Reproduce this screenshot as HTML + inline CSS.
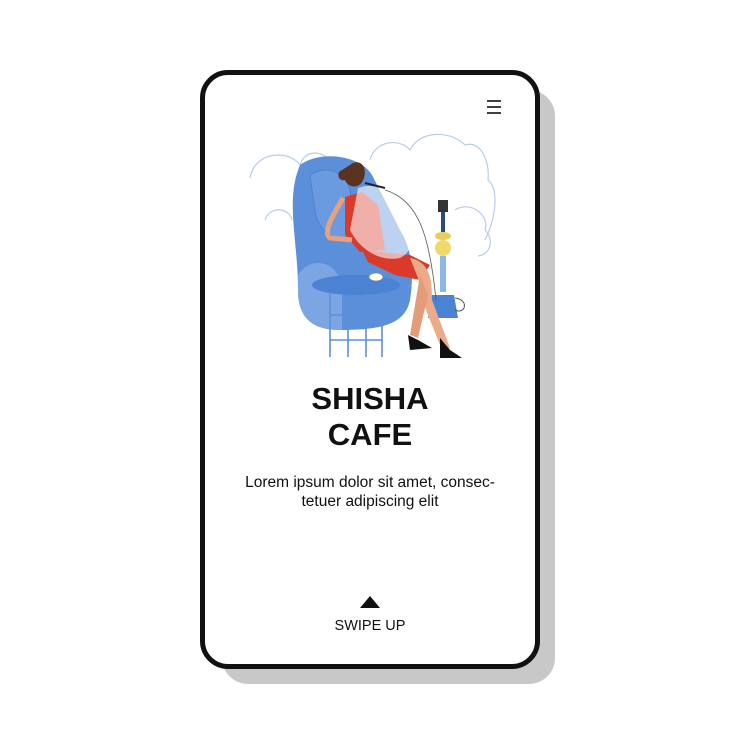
<!DOCTYPE html>
<html><head><meta charset="utf-8"><style>
html,body{margin:0;padding:0;background:#fff;}
body{width:740px;height:740px;position:relative;overflow:hidden;font-family:"Liberation Sans",sans-serif;}
.shadow{position:absolute;left:222px;top:90px;width:333px;height:594px;background:#c8c8c8;border-radius:26px;}
.phone{position:absolute;left:200px;top:70px;width:330px;height:589px;background:#fff;border:5px solid #111;border-radius:28px;}
.t{position:absolute;left:0;width:740px;text-align:center;color:#111;}
</style></head><body>
<div class="shadow"></div>
<div class="phone"></div>
<svg style="position:absolute;left:0;top:0" width="740" height="740">
 <g stroke="#111" stroke-width="1.6"><line x1="487" y1="101" x2="501" y2="101"/><line x1="487" y1="107" x2="501" y2="107"/><line x1="487" y1="113" x2="501" y2="113"/></g>
 <g fill="none" stroke="#b8cde6" stroke-width="1.2">
  <path d="M250 178 C255 150,290 150,300 165 C305 150,320 150,330 160"/>
  <path d="M265 220 C270 205,290 208,292 220"/>
  <path d="M370 160 C375 140,400 138,410 150 C420 130,450 130,465 145 C480 140,490 160,488 180 C500 190,495 220,485 240"/>
  <path d="M455 210 C470 200,490 215,485 230 C495 240,490 255,478 256"/>
 </g>
 <path d="M300 165 C320 150,360 155,372 175 L400 230 C410 245,415 270,410 300 C405 325,380 330,340 330 C305 330,298 310,298 290 C298 240,285 200,300 165 Z" fill="#5b8fd9"/>
 <path d="M310 175 C325 165,345 170,350 190 L355 240 C330 240,318 230,315 210Z" fill="#6a9be0" stroke="#4a7fcf" stroke-width="0.8"/>
 <path d="M298 275 C310 255,340 260,342 290 L342 330 C305 330,298 310,298 290Z" fill="#7ba6e3"/>
 <ellipse cx="356" cy="285" rx="44" ry="10" fill="#4a82d4"/>
 <g stroke="#5b8fd9" stroke-width="1.6" fill="none"><line x1="330" y1="292" x2="330" y2="357"/><line x1="348" y1="294" x2="348" y2="357"/><line x1="366" y1="294" x2="366" y2="357"/><line x1="382" y1="292" x2="382" y2="357"/><line x1="330" y1="315" x2="382" y2="315"/><line x1="330" y1="340" x2="382" y2="340"/></g>
 <ellipse cx="376" cy="277" rx="7" ry="4" fill="#fff" stroke="#888" stroke-width="0.8"/>
 <rect x="438" y="200" width="10" height="12" fill="#333"/>
 <rect x="441" y="212" width="4" height="20" fill="#2a4a80"/>
 <ellipse cx="443" cy="236" rx="8" ry="4" fill="#e8cd5a"/>
 <circle cx="443" cy="248" r="8" fill="#f0d86a"/>
 <rect x="440" y="256" width="6" height="36" fill="#8cb8e8"/>
 <path d="M432 295 L454 295 L458 318 L428 318Z" fill="#4a82d4"/>
 <path d="M455 298 C470 300,465 315,455 310" fill="none" stroke="#555" stroke-width="1"/>
 <path d="M350 165 C358 158,368 165,364 178 C360 190,348 188,345 180 C338 182,336 172,342 170Z" fill="#5a3220"/>
 <path d="M345 197 L362 192 L378 205 L385 250 L360 252 L345 235Z" fill="#d93a2a"/>
 <path d="M343 198 C335 212,322 232,330 238 L352 240" fill="none" stroke="#e8a07e" stroke-width="5"/>
 <path d="M362 250 L410 255 L430 265 L420 280 L395 275 L368 262Z" fill="#d93a2a"/>
 <path d="M410 258 C432 262,432 285,432 300 L450 348 L442 350 L424 305 L418 278Z" fill="#ebab88"/>
 <path d="M420 275 L410 335 L418 338 L428 295Z" fill="#e39c79"/>
 <path d="M408 335 L418 340 L432 348 L410 350Z M440 338 L450 350 L462 358 L440 358Z" fill="#111"/>
 <path d="M358 188 C378 180,395 195,400 220 C410 240,415 250,400 258 C380 262,360 250,350 230Z" fill="#fff" opacity="0.6"/>
 <line x1="365" y1="183" x2="385" y2="188" stroke="#222" stroke-width="2"/>
 <path d="M385 190 C420 200,430 240,436 300" fill="none" stroke="#555" stroke-width="0.8"/>
</svg>
<div class="t" style="top:381px;font-size:31px;font-weight:bold;line-height:36px;">SHISHA<br>CAFE</div>
<div class="t" style="top:473px;font-size:15.5px;line-height:19px;">Lorem ipsum dolor sit amet, consec-<br>tetuer adipiscing elit</div>
<svg style="position:absolute;left:0;top:0" width="740" height="740"><path d="M360 608 L370 596 L380 608Z" fill="#111"/></svg>
<div class="t" style="top:618px;font-size:14.5px;">SWIPE UP</div>
</body></html>
